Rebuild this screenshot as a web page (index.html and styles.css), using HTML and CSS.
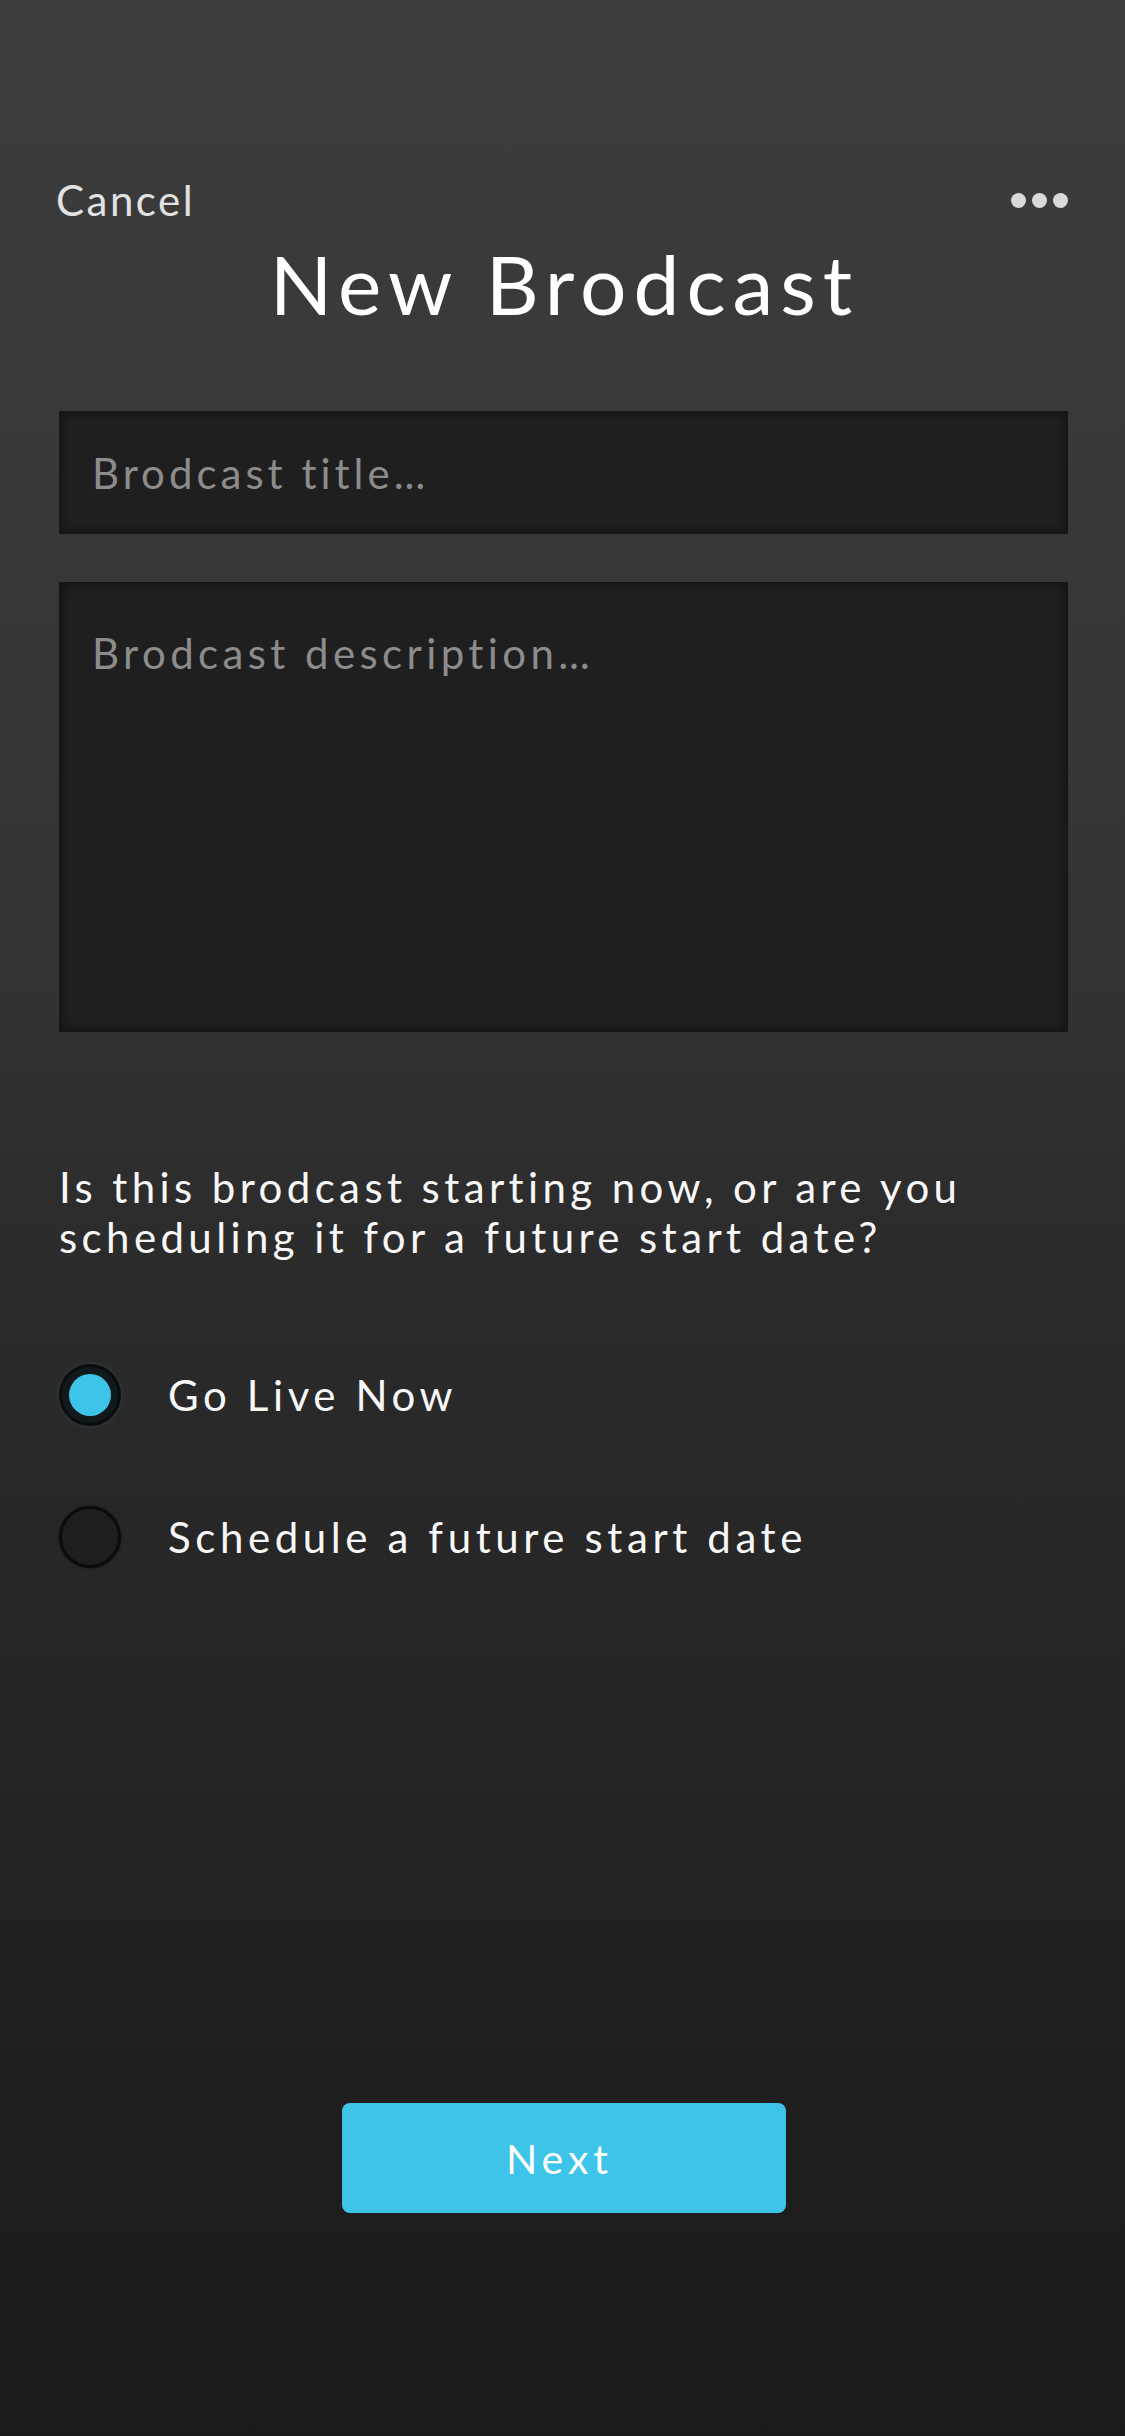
FILE: index.html
```html
<!DOCTYPE html>
<html lang="en">
<head>
<meta charset="utf-8">
<title>New Brodcast</title>
<link rel="stylesheet" href="styles.css">
</head>
<body>
<div class="screen">
  <header class="topbar">
    <span class="cancel">Cancel</span>
    <span class="dots" aria-label="More"><i></i><i></i><i></i></span>
  </header>
  <h1 class="title">New Brodcast</h1>
  <div class="fields">
    <input class="field field-title" type="text" placeholder="Brodcast title…">
    <textarea class="field field-desc" placeholder="Brodcast description…"></textarea>
  </div>
  <p class="question">Is this brodcast starting now, or are you scheduling it for a future start date?</p>
  <div class="options">
    <div class="option">
      <span class="radio radio-on"><span class="radio-dot"></span></span>
      <span class="option-label">Go Live Now</span>
    </div>
    <div class="option">
      <span class="radio"></span>
      <span class="option-label">Schedule a future start date</span>
    </div>
  </div>
  <div class="footer">
    <button class="next" type="button">Next</button>
  </div>
</div>
</body>
</html>
```
FILE: styles.css
```css
html, body {
  margin: 0;
  padding: 0;
}
body {
  width: 1125px;
  height: 2436px;
  background: linear-gradient(180deg, #3c3c3c 0%, #393939 17%, #333333 40%, #2b2b2b 52%, #252525 70%, #1f1f1f 85%, #1b1b1b 100%);
  font-family: "Lato", "Open Sans", sans-serif;
  color: #ffffff;
}
.screen {
  height: 2436px;
  box-sizing: border-box;
  padding: 0 57px 0 59px;
  display: flex;
  flex-direction: column;
}
.topbar {
  padding-top: 175px;
  height: 50px;
  display: flex;
  justify-content: space-between;
  align-items: center;
}
.cancel {
  font-size: 42px;
  line-height: 50px;
  color: #e2e2e2;
  margin-left: -3px;
  letter-spacing: 2.5px;
}
.dots {
  display: flex;
  gap: 6px;
}
.dots i {
  width: 15px;
  height: 15px;
  border-radius: 50%;
  background: #d9d9d9;
}
.title {
  margin: 8px 0 0;
  font-size: 82px;
  line-height: 100px;
  font-weight: 400;
  text-align: center;
  letter-spacing: 7px;
  padding-left: 2px;
}
.fields {
  margin-top: 78px;
  display: flex;
  flex-direction: column;
  gap: 48px;
}
.field {
  display: block;
  box-sizing: border-box;
  width: 1009px;
  margin: 0;
  background: #1f1f1f;
  border: 2px solid #161616;
  box-shadow: inset 0 0 10px rgba(0, 0, 0, 0.45);
  font-family: "Lato", "Open Sans", sans-serif;
  font-size: 42px;
  line-height: 50px;
  letter-spacing: 4px;
  color: #ffffff;
  outline: none;
  resize: none;
}
.field::placeholder {
  color: #8c8c8c;
  opacity: 1;
}
.field-title {
  height: 123px;
  padding: 0 31px;
}
.field-desc {
  height: 450px;
  padding: 44px 31px;
  letter-spacing: 4.4px;
}
.question {
  margin: 130px 0 0;
  font-size: 42px;
  line-height: 50px;
  letter-spacing: 4.4px;
  color: #f7f7f7;
}
.options {
  margin-top: 102px;
  display: flex;
  flex-direction: column;
  gap: 80px;
}
.option {
  display: flex;
  align-items: center;
  height: 62px;
}
.radio {
  width: 62px;
  height: 62px;
  box-sizing: border-box;
  border-radius: 50%;
  background: #1e1e1e;
  border: 3px solid #0b0b0b;
  box-shadow: 0 0 3px rgba(0, 0, 0, 0.5);
  display: flex;
  align-items: center;
  justify-content: center;
  flex-shrink: 0;
}
.radio-on {
  background: #12191c;
  border-color: #0a0c0d;
  box-shadow: 0 0 5px rgba(61, 196, 232, 0.18);
}
.radio-dot {
  width: 42px;
  height: 42px;
  border-radius: 50%;
  background: #3dc4e8;
}
.option-label {
  margin-left: 47px;
  font-size: 42px;
  line-height: 50px;
  letter-spacing: 4.6px;
  color: #f7f7f7;
}
.footer {
  margin-top: auto;
  margin-bottom: 223px;
  display: flex;
  justify-content: center;
}
.next {
  width: 444px;
  height: 110px;
  padding: 0 8px 0 0;
  border: none;
  border-radius: 8px;
  background: #3dc4e8;
  color: #ffffff;
  font-family: "Lato", "Open Sans", sans-serif;
  font-size: 41px;
  letter-spacing: 5px;
  cursor: pointer;
}
```
